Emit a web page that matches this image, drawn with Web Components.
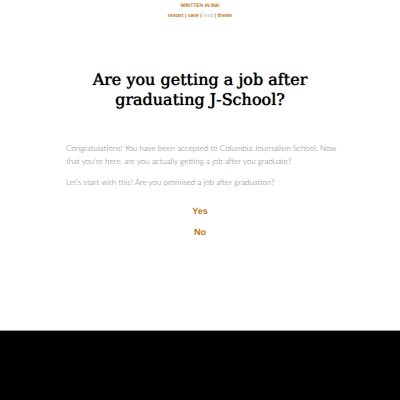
<!DOCTYPE html>
<html lang="en">
<head>
<meta charset="utf-8">
<meta name="viewport" content="width=device-width, initial-scale=1">
<title>Written in Ink</title>
<style>
  body { margin: 0; background: #000; --accent: #b5771e; font-family: Lato, "Open Sans", sans-serif; text-rendering: geometricPrecision; }
</style>
</head>
<body>
<ink-page>
  <ink-byline slot="top"></ink-byline>
  <ink-title>Are you getting a job after graduating J-School?</ink-title>
  <ink-paragraph>Congratulations! You have been accepted to Columbia Journalism School. Now that you’re here, are you actually getting a job after you graduate?</ink-paragraph>
  <ink-paragraph>Let’s start with this! Are you promised a job after graduation?</ink-paragraph>
  <ink-choice href="#yes">Yes</ink-choice>
  <ink-choice href="#no">No</ink-choice>
</ink-page>
<script>
  const define = (name, markup, setup) => customElements.define(name, class extends HTMLElement {
    constructor() {
      super();
      this.attachShadow({ mode: "open" }).innerHTML = markup;
    }
    connectedCallback() { if (setup) setup(this); }
  });

  define("ink-page", `
    <style>
      :host { display: block; background: #fff; border-bottom: 1px solid #999; }
      main { box-sizing: border-box; max-width: 720px; margin: 0 auto; padding: 48px 58px 91px; }
    </style>
    <slot name="top"></slot>
    <main><slot></slot></main>`);

  define("ink-byline", `
    <style>
      :host { display: block; text-align: center; font: bold 5px/9px "Liberation Sans", Arial, sans-serif; color: var(--accent); padding: 1px 0; }
      button { font: inherit; color: inherit; background: none; border: 0; padding: 0; cursor: pointer; }
      button:disabled { color: #ccc; cursor: default; }
      div { line-height: 10px; }
    </style>
    <div>WRITTEN IN INK</div>
    <nav><button>restart</button> | <button>save</button> | <button disabled>load</button> | <button>theme</button></nav>`);

  define("ink-title", `
    <style>
      :host { display: block; padding-bottom: 32px; }
      h1 { margin: 0; padding: 0 32px; text-align: center; color: #000; font: 400 16px/20px "DejaVu Serif", serif; text-shadow: 0 0 1px #000; }
    </style>
    <h1><slot></slot></h1>`);

  define("ink-paragraph", `
    <style>
      :host { display: block; }
      p { margin: 0 0 8px; padding-left: 8px; color: #777; font-size: 8px; font-weight: 300; line-height: 13px; }
    </style>
    <p><slot></slot></p>`);

  define("ink-choice", `
    <style>
      :host { display: block; text-align: center; padding: 8px 0 0; font: bold 9px/13px "Liberation Sans", Arial, sans-serif; }
      a { color: var(--accent); text-decoration: none; }
    </style>
    <a><slot></slot></a>`,
    host => host.shadowRoot.querySelector("a").href = host.getAttribute("href"));
</script>
</body>
</html>
